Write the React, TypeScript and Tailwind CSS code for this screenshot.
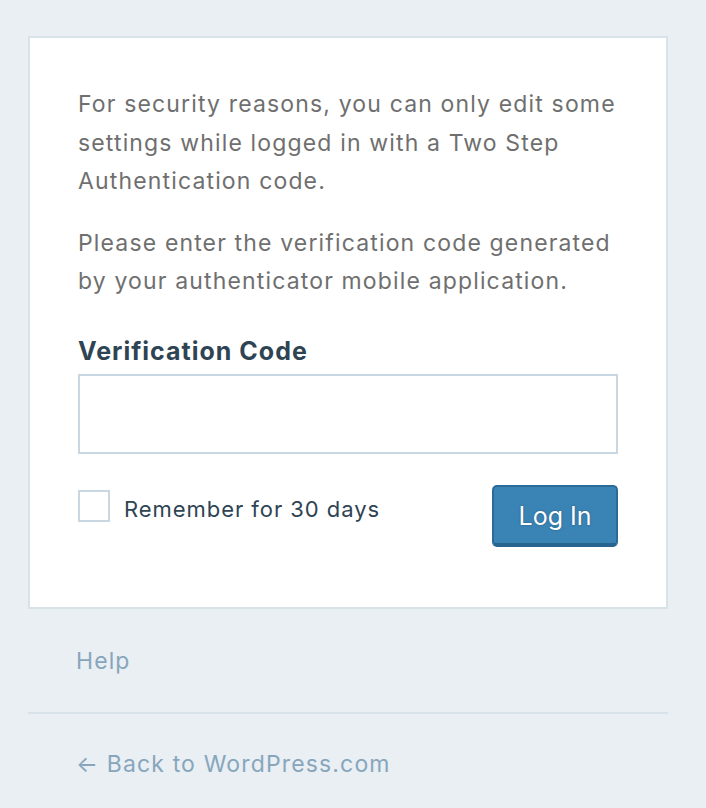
import React from "react";

export default function App() {
  return (
    <div className="min-h-[808px] w-full bg-[#e9eff3] pt-[36px] px-[28px]" style={{ fontFamily: 'Inter, "Noto Sans", sans-serif' }}>
      <div className="w-[640px] bg-white border-2 border-[#d8e2e9] px-[48px] pt-[47px] pb-[60px]">
        <p className="text-[23px] leading-[38.5px] tracking-[1.15px] text-[#6f6f6f]">
          For security reasons, you can only edit some settings while logged in with a Two Step Authentication code.
        </p>
        <p className="mt-[23px] text-[23px] leading-[38.5px] tracking-[1.15px] text-[#6f6f6f]">
          Please enter the verification code generated by your authenticator mobile application.
        </p>
        <div className="mt-[32px] text-[25px] font-bold tracking-[1px] text-[#2e4453] leading-[36px]">Verification Code</div>
        <div className="mt-[5px] h-[80px] w-full border-2 border-[#c8d7e1] bg-white"></div>
        <div className="mt-[31px] flex items-start justify-between">
          <div className="flex items-center gap-[14px] pt-[2px]">
            <div className="h-[32px] w-[32px] border-2 border-[#c8d7e1] bg-white"></div>
            <span className="text-[22px] tracking-[0.95px] text-[#2e4453] pt-[6px]">Remember for 30 days</span>
          </div>
          <button className="h-[62px] w-[126px] pt-[4px] rounded-[5px] bg-[#3a83b5] border-2 border-[#2c6b97] border-b-[4px] border-b-[#27648e] text-[25px] text-white [text-shadow:0_0_2px_rgba(0,0,0,0.35)]">
            Log In
          </button>
        </div>
      </div>
      <div className="w-[640px]">
        <div className="px-[48px] pt-[28px] pb-[27px] text-[23px] tracking-[1.1px] text-[#87a6bc] leading-[48px]">Help</div>
        <div className="h-[2px] bg-[#d8e2e9]"></div>
        <div className="px-[48px] pt-[28px] text-[23px] tracking-[1.15px] text-[#87a6bc] leading-[44px]">← Back to WordPress.com</div>
      </div>
    </div>
  );
}
